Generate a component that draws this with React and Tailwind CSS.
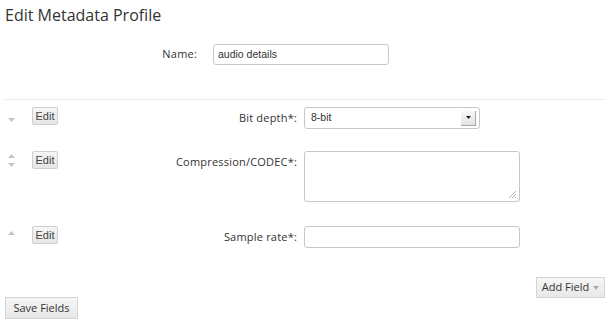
import React from "react";

const F = { fontFamily: '"Open Sans", "Noto Sans", sans-serif' };
const A = { fontFamily: '"Liberation Sans", Arial, sans-serif' };

function Up() {
  return (
    <svg width="7" height="4" viewBox="0 0 7 4" className="block">
      <path d="M0 4 L3.5 0 L7 4 Z" fill="#c4c4c4" />
    </svg>
  );
}
function Down() {
  return (
    <svg width="7" height="4" viewBox="0 0 7 4" className="block">
      <path d="M0 0 L3.5 4 L7 0 Z" fill="#c4c4c4" />
    </svg>
  );
}

function EditBtn() {
  return (
    <button
      className="w-[26px] h-[18px] rounded-[2px] border border-[#cfcfcf] bg-gradient-to-b from-[#f6f6f6] to-[#e6e6e6] text-[11px] leading-none text-[#444] flex items-center justify-center"
      style={A}
    >
      Edit
    </button>
  );
}

function Row({ arrows, label, children, mt }) {
  return (
    <div className={`flex items-start ${mt}`}>
      <div className="w-[27px] pl-[3px] h-[18px] flex flex-col justify-center gap-[5px]">
        {arrows === "down" && (
          <div className="mt-[8px]">
            <Down />
          </div>
        )}
        {arrows === "both" && (
          <div className="flex flex-col gap-[5px] mt-[1px]">
            <Up />
            <Down />
          </div>
        )}
        {arrows === "up" && (
          <div className="-mt-[4px]">
            <Up />
          </div>
        )}
      </div>
      <EditBtn />
      <div className="w-[239px] text-right text-[11px] tracking-[0.2px] text-[#333] pt-[3px] leading-[16px]" style={F}>
        {label}
      </div>
      <div className="ml-[7px]">{children}</div>
    </div>
  );
}

export default function App() {
  return (
    <div className="w-[614px] h-[324px] bg-white relative text-[#333]">
      <div className="pl-[5px] pt-[5px]">
        <h1 className="text-[16px] leading-[20px] text-[#333]" style={F}>
          Edit Metadata Profile
        </h1>
        <div className="flex items-center mt-[19px]">
          <div className="w-[192px] text-right text-[11px] tracking-[0.2px]" style={F}>
            Name:
          </div>
          <div className="ml-[16px] w-[176px] h-[21px] border border-[#c8c8c8] rounded-[3px] flex items-center pl-[4px] text-[10.5px] text-[#333]" style={A}>
            audio details
          </div>
        </div>
        <div className="mt-[34px] mr-[9px] h-px bg-[#e8e8e8]" />
        <Row arrows="down" label="Bit depth*:" mt="mt-[7px]">
          <div className="w-[176px] h-[22px] border border-[#c8c8c8] rounded-[3px] flex items-center justify-between pl-[6px] pr-[3px] text-[10.5px]" style={A}>
            <span>8-bit</span>
            <div className="w-[15px] h-[15px] border-r border-b border-[#a8a8a8] bg-gradient-to-b from-[#f7f7f7] to-[#e4e4e4] flex items-center justify-center">
              <svg width="5" height="3" viewBox="0 0 5 3"><path d="M0 0 L2.5 3 L5 0 Z" fill="#222" /></svg>
            </div>
          </div>
        </Row>
        <Row arrows="both" label="Compression/CODEC*:" mt="mt-[22px]">
          <div className="w-[216px] h-[51px] border border-[#c8c8c8] rounded-[3px] relative">
            <svg width="8" height="8" viewBox="0 0 8 8" className="absolute right-[3px] bottom-[3px]">
              <path d="M1 8 L8 1 M4 8 L8 4 M7 8 L8 7" stroke="#999" strokeWidth="0.8" />
            </svg>
          </div>
        </Row>
        <Row arrows="up" label="Sample rate*:" mt="mt-[24px]">
          <div className="w-[216px] h-[22px] border border-[#c8c8c8] rounded-[3px]" />
        </Row>
        <div className="flex justify-end mr-[9px] mt-[29px]">
          <button className="w-[69px] h-[21px] border border-[#d4d4d4] bg-gradient-to-b from-[#f6f6f6] to-[#e8e8e8] text-[11px] text-[#333] flex items-center justify-center gap-[4px]" style={F}>
            Add Field
            <svg width="6" height="4" viewBox="0 0 6 4"><path d="M0 0 L3 4 L6 0 Z" fill="#aaa" /></svg>
          </button>
        </div>
        <button className="-mt-[1px] w-[73px] h-[22px] border border-[#d4d4d4] bg-gradient-to-b from-[#f6f6f6] to-[#e8e8e8] text-[11px] text-[#333] flex items-center justify-center" style={F}>
          Save Fields
        </button>
      </div>
    </div>
  );
}
